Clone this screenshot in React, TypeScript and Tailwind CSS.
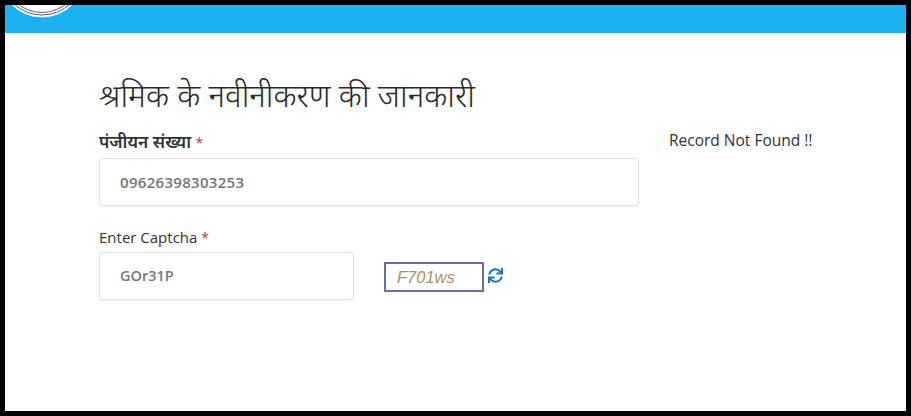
import { FaSync } from "react-icons/fa";

export default function App() {
  return (
    <div className="w-[911px] h-[416px] bg-black p-[5px] overflow-hidden font-['Open_Sans','Noto_Sans',sans-serif]">
      <div className="w-[901px] h-[406px] bg-white flex flex-col">
        <header className="relative h-[28px] shrink-0 bg-[#1ab2f0] overflow-hidden">
          <svg className="absolute left-0 top-0" width="90" height="28" viewBox="0 0 90 28">
            <circle cx="37" cy="-31" r="43" fill="#fff" stroke="#e8f4fa" strokeWidth="1" />
            <circle cx="37" cy="-31" r="41" fill="none" stroke="#6b5a5f" strokeWidth="1" />
            <circle cx="37" cy="-31" r="38.5" fill="none" stroke="#6b5a5f" strokeWidth="1" />
          </svg>
        </header>
        <main className="flex pl-[94px] pt-[42px]">
          <div className="w-[540px] shrink-0">
            <h1 className="text-[31.7px] leading-[40px] font-light text-[#2a2a2a]">श्रमिक के नवीनीकरण की जानकारी</h1>
            <label className="block mt-[15px] text-[17.3px] leading-[24px] font-semibold text-[#333]">
              पंजीयन संख्या <span className="text-[#c0392b] font-normal text-[14px]">*</span>
            </label>
            <input
              readOnly
              value="09626398303253"
              className="mt-[3px] block w-[540px] h-[48px] rounded-[4px] border border-[#dfe1e5] bg-white px-[20px] text-[15px] font-semibold text-[#777] tracking-[0.3px] shadow-[0_1px_2px_rgba(0,0,0,0.08)] outline-none"
            />
            <label className="block mt-[19px] text-[15px] leading-[24px] text-[#333]">
              Enter Captcha <span className="text-[#c0392b] text-[14px]">*</span>
            </label>
            <div className="flex items-center mt-[2px]">
              <input
                readOnly
                value="GOr31P"
                className="block w-[255px] h-[48px] rounded-[4px] border border-[#dfe1e5] bg-white px-[20px] pb-[2px] text-[14.5px] font-semibold text-[#777] shadow-[0_1px_2px_rgba(0,0,0,0.08)] outline-none"
              />
              <div className="ml-[30px] mt-[2px] w-[100px] h-[30px] border-2 border-[#6f69ad] flex items-center pl-[11px] font-['Liberation_Sans',sans-serif] italic text-[16.5px] text-[#b48c5e]">
                F701ws
              </div>
              <FaSync className="ml-[4px] mb-[2px] text-[#1b74d0] text-[15px]" />
            </div>
          </div>
          <p className="ml-[30px] mt-[53px] text-[15.5px] leading-[24px] text-[#333]">Record Not Found !!</p>
        </main>
      </div>
    </div>
  );
}
